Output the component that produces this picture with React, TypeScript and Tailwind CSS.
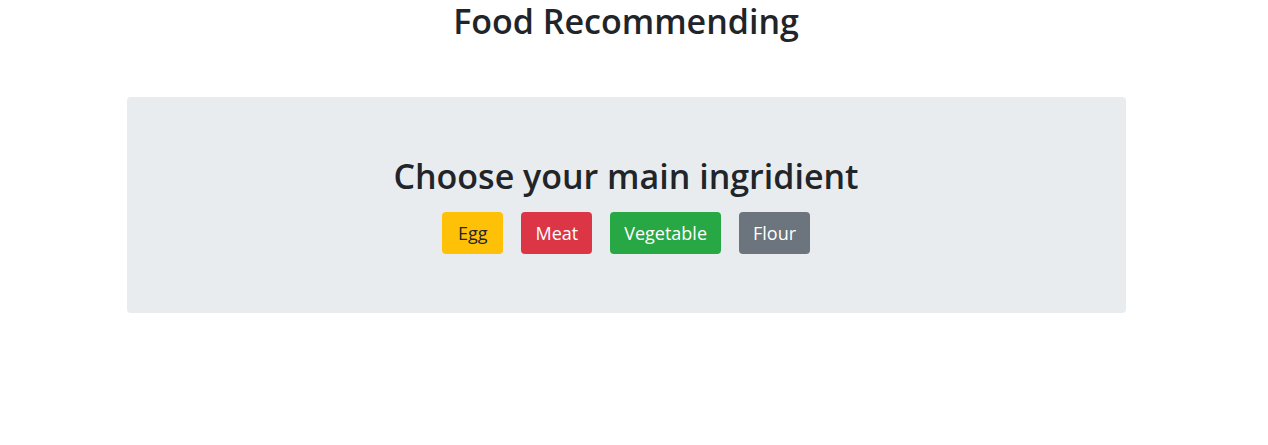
export default function App() {
  const buttons = [
    { label: "Egg", cls: "bg-[#ffc107] text-[#212529] px-[16px]" },
    { label: "Meat", cls: "bg-[#dc3545] text-white px-[14px]" },
    { label: "Vegetable", cls: "bg-[#28a745] text-white px-[14px]" },
    { label: "Flour", cls: "bg-[#6c757d] text-white px-[14px]" },
  ];

  return (
    <div
      className="w-[1252px] bg-white text-[#212529]"
      style={{ fontFamily: '"Open Sans", "Noto Sans", sans-serif' }}
    >
      <h1 className="m-0 text-center text-[34px] font-semibold leading-[43px]">
        Food Recommending
      </h1>
      <div className="mx-auto mt-[54px] flex h-[216px] w-[999px] flex-col items-center rounded-[4px] bg-[#e9ecef] pt-[58px]">
        <h2 className="m-0 text-[34px] font-semibold leading-[43px]">
          Choose your main ingridient
        </h2>
        <div className="mt-[14px] flex gap-[18px]">
          {buttons.map((b) => (
            <button
              key={b.label}
              className={`h-[42px] rounded-[4px] text-[18px] leading-[27px] ${b.cls}`}
            >
              {b.label}
            </button>
          ))}
        </div>
      </div>
    </div>
  );
}
